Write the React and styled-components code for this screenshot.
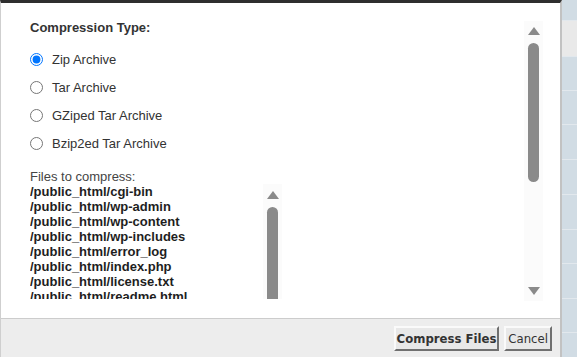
import React from "react";
import styled, { createGlobalStyle } from "styled-components";

const GlobalStyle = createGlobalStyle`
  html, body {
    margin: 0;
    padding: 0;
    overflow: hidden;
    background: #d1dce4;
  }
`;

const Page = styled.div`
  display: flex;
  width: 577px;
  height: 357px;
`;

const Dialog = styled.div`
  width: 559px;
  height: 354px;
  display: flex;
  flex-direction: column;
  border-top: 3px solid #2f2f2f;
  border-left: 1px solid #cfcfcf;
  border-right: 2px solid #c2c2c2;
  background: #fff;
  font-family: "Liberation Sans", Arial, sans-serif;
  font-size: 13px;
  line-height: 15px;
  color: #333;
`;

const Body = styled.div`
  flex: 1;
  display: flex;
  overflow: hidden;
  border-bottom: 1px solid #cccccc;
`;

const Content = styled.div`
  flex: 1;
  padding: 17px 0 0 29px;
  overflow: hidden;
`;

const Heading = styled.div`
  font-weight: bold;
  color: #333;
  margin-bottom: 10px;
`;

const RadioRow = styled.label`
  display: flex;
  align-items: center;
  gap: 9px;
  height: 28px;
  color: #333;
`;

const Radio = styled.input`
  margin: 0;
  width: 13px;
  height: 13px;
  accent-color: #0075ff;
`;

const FilesLabel = styled.div`
  margin-top: 12px;
  color: #444;
`;

const FileBox = styled.div`
  display: flex;
  width: 252px;
  height: 115px;
  overflow: hidden;
`;

const FileList = styled.div`
  flex: 1;
  font-weight: bold;
  color: #1e1e1e;
  white-space: nowrap;
`;

const Track = styled.div`
  width: 19px;
  display: flex;
  flex-direction: column;
  align-items: center;
  background: #fbfbfb;
  flex-shrink: 0;
  margin: ${(p) => p.$margin || "0"};
`;

const ArrowButton = styled.div`
  height: ${(p) => p.$h || 20}px;
  display: flex;
  align-items: center;
  justify-content: center;
  flex-shrink: 0;
`;

const Thumb = styled.div`
  width: 11px;
  height: ${(p) => p.$h}px;
  margin-top: 2px;
  background: #8a8a8a;
  border-radius: ${(p) => (p.$open ? "6px 6px 0 0" : "6px")};
  flex-shrink: 0;
`;

const Spacer = styled.div`
  flex: 1;
`;

const Footer = styled.div`
  height: 38px;
  display: flex;
  align-items: center;
  justify-content: flex-end;
  gap: 5px;
  padding-right: 8px;
  background: #ededed;
`;

const Button = styled.button`
  height: 25px;
  padding: 0 ${(p) => (p.$primary ? 1 : 2)}px;
  font-family: "DejaVu Sans Condensed", "DejaVu Sans", Verdana, sans-serif;
  font-size: 13px;
  font-stretch: condensed;
  font-weight: ${(p) => (p.$primary ? "bold" : "normal")};
  color: #333;
  background: #e8e8e8;
  border: 2px solid;
  border-color: #fafafa #707070 #707070 #fafafa;
  cursor: pointer;
`;

const Strip = styled.div`
  flex: 1;
  display: flex;
  flex-direction: column;
`;

const StripRow = styled.div`
  height: ${(p) => p.$h}px;
  flex-shrink: 0;
  background: ${(p) => (p.$active ? "#e9e9e9" : "#d1dce4")};
  border-bottom: 1px solid #e2e8ed;
`;

const Triangle = ({ down }) => (
  <svg width="12" height="8" viewBox="0 0 12 8">
    <polygon
      points={down ? "0,0 12,0 6,8" : "0,8 12,8 6,0"}
      fill="#8a8a8a"
    />
  </svg>
);

const types = ["Zip Archive", "Tar Archive", "GZiped Tar Archive", "Bzip2ed Tar Archive"];

const files = [
  "/public_html/cgi-bin",
  "/public_html/wp-admin",
  "/public_html/wp-content",
  "/public_html/wp-includes",
  "/public_html/error_log",
  "/public_html/index.php",
  "/public_html/license.txt",
  "/public_html/readme.html",
  "/public_html/wp-config.php",
];

const stripRows = [20, 35, 33, 33, 34, 34, 34, 33, 34, 33, 30];

export default function App() {
  return (
    <Page>
      <GlobalStyle />
      <Dialog>
        <Body>
          <Content>
            <Heading>Compression Type:</Heading>
            {types.map((t, i) => (
              <RadioRow key={t}>
                <Radio type="radio" name="ctype" defaultChecked={i === 0} />
                {t}
              </RadioRow>
            ))}
            <FilesLabel>Files to compress:</FilesLabel>
            <FileBox>
              <FileList>
                {files.map((f) => (
                  <div key={f}>{f}</div>
                ))}
              </FileList>
              <Track>
                <ArrowButton $h={21}>
                  <Triangle />
                </ArrowButton>
                <Thumb $h={100} $open />
              </Track>
            </FileBox>
          </Content>
          <Track $margin="18px 17px 17px 0">
            <ArrowButton>
              <Triangle />
            </ArrowButton>
            <Thumb $h={139} />
            <Spacer />
            <ArrowButton>
              <Triangle down />
            </ArrowButton>
          </Track>
        </Body>
        <Footer>
          <Button $primary>Compress Files</Button>
          <Button>Cancel</Button>
        </Footer>
      </Dialog>
      <Strip>
        {stripRows.map((h, i) => (
          <StripRow key={i} $h={h} $active={i === 1} />
        ))}
      </Strip>
    </Page>
  );
}
